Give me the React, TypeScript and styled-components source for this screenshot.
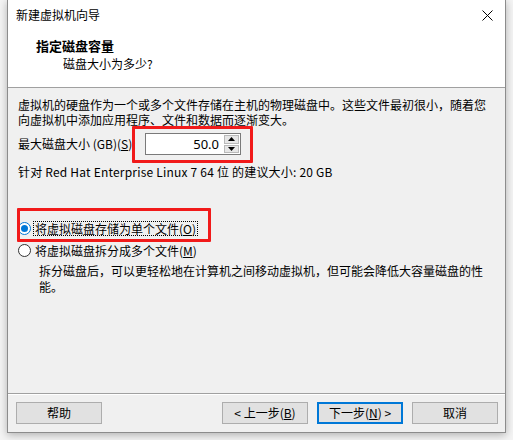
import React from "react";
import styled, { createGlobalStyle } from "styled-components";

const Global = createGlobalStyle`
  html, body { margin: 0; padding: 0; background: #f4f4f4; }
  body {
    font-family: "Noto Sans CJK SC", "Noto Sans", "Liberation Sans", sans-serif;
    font-size: 12px;
    color: #000;
    width: 513px;
    height: 440px;
    overflow: hidden;
  }
  u { text-decoration: underline; text-underline-offset: 1px; }
`;

const Page = styled.div`
  width: 513px;
  height: 440px;
  padding-left: 7px;
  box-sizing: border-box;
`;

const Window = styled.div`
  width: 499px;
  height: 433px;
  box-sizing: border-box;
  border: 1px solid #8c8c8c;
  border-top: none;
  background: #f0f0f0;
  display: flex;
  flex-direction: column;
  box-shadow: 0 2px 8px rgba(0, 0, 0, 0.28);
`;

const TitleBar = styled.div`
  height: 30px;
  background: #fff;
  display: flex;
  align-items: center;
  justify-content: space-between;
  padding-left: 8px;
  padding-right: 10px;
`;

const TitleText = styled.span`
  font-size: 12px;
  line-height: 16px;
`;

const CloseButton = styled.div`
  width: 16px;
  height: 16px;
  display: flex;
  align-items: center;
  justify-content: center;
`;

const Header = styled.div`
  height: 58px;
  background: #fff;
  border-bottom: 1px solid #a0a0a0;
  padding: 8px 0 0 28px;
  box-sizing: border-box;
  display: flex;
  flex-direction: column;
  gap: 2px;
`;

const HeaderTitle = styled.div`
  font-size: 13px;
  font-weight: 700;
  line-height: 16px;
`;

const HeaderSub = styled.div`
  font-size: 12px;
  line-height: 16px;
  padding-left: 27px;
`;

const Body = styled.div`
  flex: 1;
  padding: 9px 0 0 10px;
  display: flex;
  flex-direction: column;
`;

const Intro = styled.div`
  font-size: 12px;
  line-height: 15px;
  width: 480px;
`;

const SizeRow = styled.div`
  margin-top: 6px;
  display: flex;
  align-items: center;
  height: 22px;
`;

const FieldLabel = styled.span`
  line-height: 16px;
  width: 127px;
`;

const SpinWrap = styled.div`
  position: relative;
  width: 96px;
  height: 22px;
  box-sizing: border-box;
  border: 1px solid #7a7a7a;
  background: #fff;
  display: flex;
`;

const SpinValue = styled.div`
  flex: 1;
  text-align: right;
  padding-right: 4px;
  font-family: "Noto Sans", "Liberation Sans", sans-serif;
  font-size: 13px;
  line-height: 20px;
`;

const SpinButtons = styled.div`
  width: 15px;
  display: flex;
  flex-direction: column;
  gap: 1px;
  padding: 1px;
`;

const SpinBtn = styled.div`
  flex: 1;
  background: #e6e6e6;
  border: 1px solid #b9b9b9;
  display: flex;
  align-items: center;
  justify-content: center;
`;

const Highlight = styled.div<{ $l: number; $t: number; $w: number; $h: number }>`
  position: absolute;
  left: ${(p) => p.$l}px;
  top: ${(p) => p.$t}px;
  width: ${(p) => p.$w}px;
  height: ${(p) => p.$h}px;
  box-sizing: border-box;
  border: 3px solid #f11a1a;
  border-radius: 1px;
  pointer-events: none;
`;

const Recommend = styled.div`
  margin-top: 9px;
  line-height: 15px;
  letter-spacing: 0.2px;
`;

const RadioGroup = styled.div`
  margin-top: 38px;
  display: flex;
  flex-direction: column;
`;

const RadioRow = styled.div`
  position: relative;
  height: 22px;
  display: flex;
  align-items: center;
  gap: 3px;
`;

const RadioCircle = styled.div<{ $checked?: boolean }>`
  width: 13px;
  height: 13px;
  box-sizing: border-box;
  border-radius: 50%;
  border: 1px solid ${(p) => (p.$checked ? "#0078d7" : "#333")};
  background: #fff;
  display: flex;
  align-items: center;
  justify-content: center;
  &::after {
    content: "";
    width: 7px;
    height: 7px;
    border-radius: 50%;
    background: ${(p) => (p.$checked ? "#0078d7" : "transparent")};
  }
`;

const RadioLabel = styled.span<{ $focus?: boolean }>`
  line-height: 13px;
  padding: 0 1px;
  outline: ${(p) => (p.$focus ? "1px dotted #000" : "none")};
  outline-offset: 0;
`;

const Desc = styled.div`
  margin-top: 2px;
  padding-left: 21px;
  width: 450px;
  line-height: 16px;
`;

const Footer = styled.div`
  height: 39px;
  border-top: 1px solid #a0a0a0;
  box-shadow: inset 0 1px 0 #fff;
  display: flex;
  align-items: flex-start;
  padding: 8px 7px 0 8px;
  box-sizing: border-box;
`;

const Spacer = styled.div`
  flex: 1;
`;

const ButtonGroup = styled.div`
  display: flex;
  gap: 9px;
`;

const Button = styled.div<{ $default?: boolean }>`
  width: 86px;
  height: 22px;
  box-sizing: border-box;
  background: #e1e1e1;
  border: ${(p) => (p.$default ? "2px solid #0078d7" : "1px solid #adadad")};
  display: flex;
  align-items: center;
  justify-content: center;
  font-size: 12px;
  line-height: 14px;
`;

export default function App() {
  return (
    <>
      <Global />
      <Page>
        <Window>
          <TitleBar>
            <TitleText>新建虚拟机向导</TitleText>
            <CloseButton>
              <svg width="11" height="11" viewBox="0 0 11 11">
                <path d="M0.5 0.5 L10.5 10.5 M10.5 0.5 L0.5 10.5" stroke="#000" strokeWidth="1" fill="none" />
              </svg>
            </CloseButton>
          </TitleBar>
          <Header>
            <HeaderTitle>指定磁盘容量</HeaderTitle>
            <HeaderSub>磁盘大小为多少?</HeaderSub>
          </Header>
          <Body>
            <Intro>
              虚拟机的硬盘作为一个或多个文件存储在主机的物理磁盘中。这些文件最初很小，随着您
              向虚拟机中添加应用程序、文件和数据而逐渐变大。
            </Intro>
            <SizeRow>
              <FieldLabel>
                最大磁盘大小 (GB)(<u>S</u>):
              </FieldLabel>
              <SpinWrap>
                <SpinValue>50.0</SpinValue>
                <SpinButtons>
                  <SpinBtn>
                    <svg width="7" height="4" viewBox="0 0 7 4">
                      <path d="M0 4 L3.5 0 L7 4 Z" fill="#000" />
                    </svg>
                  </SpinBtn>
                  <SpinBtn>
                    <svg width="7" height="4" viewBox="0 0 7 4">
                      <path d="M0 0 L3.5 4 L7 0 Z" fill="#000" />
                    </svg>
                  </SpinBtn>
                </SpinButtons>
                <Highlight $l={-14} $t={-8} $w={121} $h={37} />
              </SpinWrap>
            </SizeRow>
            <Recommend>针对 Red Hat Enterprise Linux 7 64 位 的建议大小: 20 GB</Recommend>
            <RadioGroup>
              <RadioRow>
                <RadioCircle $checked />
                <RadioLabel $focus>
                  将虚拟磁盘存储为单个文件(<u>O</u>)
                </RadioLabel>
                <Highlight $l={-1} $t={-9} $w={194} $h={34} />
              </RadioRow>
              <RadioRow>
                <RadioCircle />
                <RadioLabel>
                  将虚拟磁盘拆分成多个文件(<u>M</u>)
                </RadioLabel>
              </RadioRow>
              <Desc>
                拆分磁盘后，可以更轻松地在计算机之间移动虚拟机，但可能会降低大容量磁盘的性能。
              </Desc>
            </RadioGroup>
          </Body>
          <Footer>
            <Button>帮助</Button>
            <Spacer />
            <ButtonGroup>
              <Button>
                &lt; 上一步(<u>B</u>)
              </Button>
              <Button $default>
                下一步(<u>N</u>) &gt;
              </Button>
              <Button>取消</Button>
            </ButtonGroup>
          </Footer>
        </Window>
      </Page>
    </>
  );
}
